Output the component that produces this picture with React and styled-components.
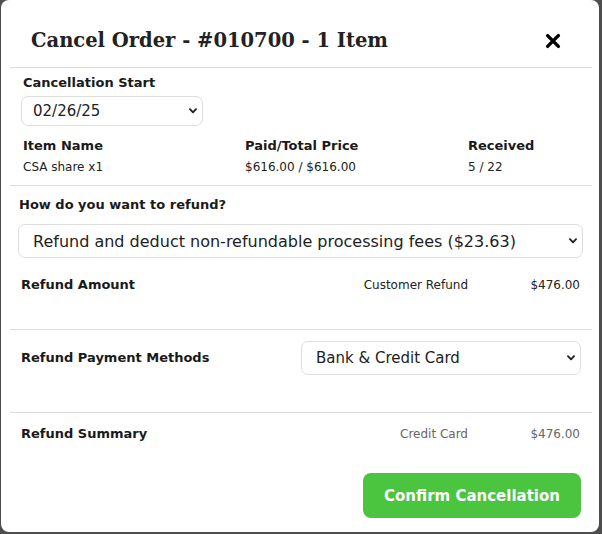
import React from "react";
import styled, { createGlobalStyle } from "styled-components";

const Global = createGlobalStyle`
  html, body { margin: 0; padding: 0; }
  body {
    background: #4d4d4d;
    font-family: "DejaVu Sans", "Liberation Sans", sans-serif;
    color: #1c1c1c;
  }
`;

const Backdrop = styled.div`
  width: 602px;
  height: 534px;
  background: #4d4d4d;
  overflow: hidden;
`;

const Modal = styled.div`
  margin-left: 1px;
  width: 598px;
  height: 532px;
  background: #ffffff;
  border-radius: 8px;
  padding: 0 7px 0 9px;
  box-sizing: border-box;
  display: flex;
  flex-direction: column;
`;

const Header = styled.div`
  display: flex;
  align-items: center;
  justify-content: space-between;
  padding: 26px 31px 11px 21px;
  border-bottom: 1px solid #dcdcdc;
`;

const Title = styled.h2`
  margin: 0;
  font-family: "DejaVu Serif", "Liberation Serif", serif;
  font-weight: 700;
  font-size: 19.5px;
  line-height: 30px;
  color: #222;
`;

const CloseButton = styled.button`
  border: 0;
  background: none;
  padding: 0;
  width: 16px;
  height: 16px;
  display: flex;
  cursor: pointer;
`;

const Section = styled.div`
  display: flex;
  flex-direction: column;
  padding: ${(p) => p.$pad};
  border-bottom: ${(p) => (p.$last ? "none" : "1px solid #dcdcdc")};
`;

const Label = styled.div`
  font-weight: 700;
  font-size: 13px;
  line-height: 16px;
  color: #1a1a1a;
  padding-left: ${(p) => p.$indent || 0}px;
`;

const SelectWrap = styled.div`
  position: relative;
  width: ${(p) => p.$width};
  margin: ${(p) => p.$margin || 0};
`;

const Select = styled.select`
  appearance: none;
  -webkit-appearance: none;
  width: 100%;
  height: ${(p) => p.$height}px;
  box-sizing: border-box;
  border: 1px solid #dedede;
  border-radius: 7px;
  background: #fff;
  padding: 0 28px 0 ${(p) => p.$padLeft}px;
  font-family: "DejaVu Sans", "Liberation Sans", sans-serif;
  font-size: ${(p) => p.$size}px;
  color: #222;
  outline: none;
`;

const Chevron = styled.svg`
  position: absolute;
  right: ${(p) => p.$right}px;
  top: 50%;
  margin-top: -3px;
  width: 8px;
  height: 6px;
  pointer-events: none;
`;

const ItemTable = styled.div`
  display: grid;
  grid-template-columns: 222px 223px 1fr;
  row-gap: 5px;
  margin-top: 12px;
  padding-left: 13px;
`;

const HeadCell = styled.div`
  font-weight: 700;
  font-size: 13px;
  line-height: 16px;
  color: #1a1a1a;
`;

const Cell = styled.div`
  font-size: 12px;
  line-height: 16px;
  color: #222;
`;

const InfoRow = styled.div`
  display: flex;
  align-items: center;
  justify-content: space-between;
  margin-top: ${(p) => p.$top || 0}px;
  padding: 0 12px 0 11px;
`;

const Values = styled.div`
  display: grid;
  grid-template-columns: auto 80px;
  column-gap: 32px;
  font-size: 12px;
  line-height: 16px;
  color: ${(p) => (p.$muted ? "#666" : "#222")};
  text-align: right;
`;

const ButtonRow = styled.div`
  display: flex;
  justify-content: flex-end;
  margin-top: 31px;
  padding-right: 11px;
`;

const ConfirmButton = styled.button`
  width: 218px;
  height: 45px;
  border: 0;
  border-radius: 8px;
  background: #4bc43f;
  color: #fff;
  font-family: "DejaVu Sans", "Liberation Sans", sans-serif;
  font-weight: 700;
  font-size: 15px;
  cursor: pointer;
`;

function ChevronIcon({ right }) {
  return (
    <Chevron $right={right} viewBox="0 0 8 6">
      <path d="M1 1.2 L4 4.3 L7 1.2" fill="none" stroke="#222" strokeWidth="1.9" strokeLinecap="round" strokeLinejoin="round" />
    </Chevron>
  );
}

function Dropdown({ width, height, size, padLeft, margin, chevronRight, value }) {
  return (
    <SelectWrap $width={width} $margin={margin}>
      <Select $height={height} $size={size} $padLeft={padLeft} defaultValue={value}>
        <option value={value}>{value}</option>
      </Select>
      <ChevronIcon right={chevronRight} />
    </SelectWrap>
  );
}

export default function App() {
  return (
    <Backdrop>
      <Global />
      <Modal>
        <Header>
          <Title>Cancel Order - #010700 - 1 Item</Title>
          <CloseButton aria-label="Close">
            <svg width="16" height="16" viewBox="0 0 16 16">
              <path d="M2.6 2.6 L13.4 13.4 M13.4 2.6 L2.6 13.4" stroke="#000" strokeWidth="3.4" strokeLinecap="round" />
            </svg>
          </CloseButton>
        </Header>

        <Section $pad="7px 0 10px 0">
          <Label $indent={13}>Cancellation Start</Label>
          <Dropdown width="182px" height={30} size={15} padLeft={11} margin="5px 0 0 11px" chevronRight={6} value="02/26/25" />
          <ItemTable>
            <HeadCell>Item Name</HeadCell>
            <HeadCell>Paid/Total Price</HeadCell>
            <HeadCell>Received</HeadCell>
            <Cell>CSA share x1</Cell>
            <Cell>$616.00 / $616.00</Cell>
            <Cell>5 / 22</Cell>
          </ItemTable>
        </Section>

        <Section $pad="11px 0 36px 0">
          <Label $indent={9}>How do you want to refund?</Label>
          <Dropdown
            width="565px"
            height={34}
            size={16}
            padLeft={14}
            margin="11px 0 0 8px"
            chevronRight={6}
            value="Refund and deduct non-refundable processing fees ($23.63)"
          />
          <InfoRow $top={19}>
            <Label>Refund Amount</Label>
            <Values>
              <span>Customer Refund</span>
              <span>$476.00</span>
            </Values>
          </InfoRow>
        </Section>

        <Section $pad="11px 0 37px 0">
          <InfoRow>
            <Label>Refund Payment Methods</Label>
            <Dropdown width="280px" height={34} size={15} padLeft={14} margin="0 -1px 0 0" chevronRight={6} value="Bank & Credit Card" />
          </InfoRow>
        </Section>

        <Section $pad="13px 0 0 0" $last>
          <InfoRow>
            <Label>Refund Summary</Label>
            <Values $muted>
              <span>Credit Card</span>
              <span>$476.00</span>
            </Values>
          </InfoRow>
          <ButtonRow>
            <ConfirmButton>Confirm Cancellation</ConfirmButton>
          </ButtonRow>
        </Section>
      </Modal>
    </Backdrop>
  );
}
